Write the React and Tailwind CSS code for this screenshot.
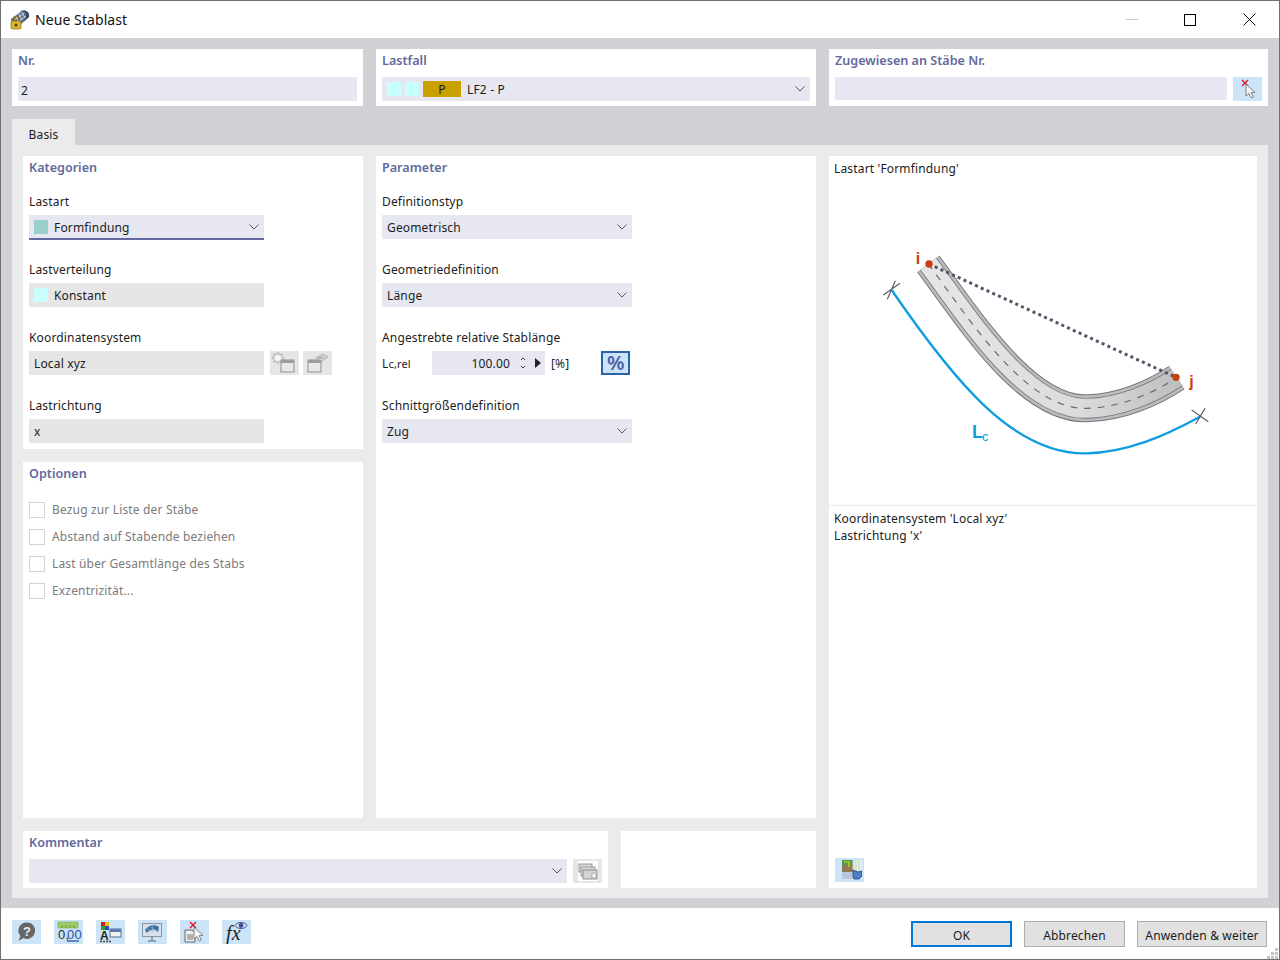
import React from 'react'

const headingCls = 'text-[12.6px] tracking-normal font-semibold text-[#636a9c] leading-[24px] h-[22px]'

function Chevron() {
  return (
    <svg width="10" height="6" viewBox="0 0 10 6" className="shrink-0">
      <path d="M0.5 0.5 L5 5 L9.5 0.5" fill="none" stroke="#55555f" strokeWidth="1" />
    </svg>
  )
}

function Heading({ children }) {
  return <div className={headingCls}>{children}</div>
}

function Txt({ className = '', children }) {
  return <span className={`pt-[2px] ${className}`}>{children}</span>
}

function Select({ className = '', children }) {
  return (
    <div className={`h-6 bg-[#e6e7f1] flex items-center justify-between pl-[5px] pr-[5px] ${className}`}>
      <div className="flex items-center min-w-0">{children}</div>
      <Chevron />
    </div>
  )
}

function Group({ label, children, last }) {
  return (
    <div className={last ? '' : 'mb-5'}>
      <div className="h-6 leading-[22px]">{label}</div>
      {children}
    </div>
  )
}

function Check({ label }) {
  return (
    <div className="h-[27px] flex items-center gap-[7px] text-[#7b7b7b]">
      <div className="w-4 h-4 border border-[#d4d4d4] bg-white" />
      <span>{label}</span>
    </div>
  )
}

function IconBtn({ children, tone = 'blue', className = '' }) {
  return (
    <div className={`w-[29px] h-6 flex items-center justify-center shrink-0 ${tone === 'blue' ? 'bg-[#cce4f7]' : 'bg-[#e6e6e6]'} ${className}`}>
      {children}
    </div>
  )
}

function Cursor({ x = 0, y = 0 }) {
  return (
    <g transform={`translate(${x} ${y})`}>
      <path d="M0 0 L0 12 L3 9.5 L5.2 14 L7.4 13 L5.2 8.6 L9 8.4 Z" fill="#f4f4f4" stroke="#777" strokeWidth="0.9" strokeLinejoin="round" />
    </g>
  )
}

function RedX({ x, y }) {
  return <path d={`M${x} ${y} l6 6 M${x + 6} ${y} l-6 6`} stroke="#e8112d" strokeWidth="1.4" />
}

function TitleIcon() {
  return (
    <svg width="20" height="20" viewBox="0 0 20 20" className="shrink-0">
      <path d="M1 9 L11 1 C14 -0.5 20 2 19 7 L9 16 C5 17 1 14 1 9 Z" fill="#5f7190" />
      <path d="M12 1 C16 1 17 5 15 9 L13 12 L19 7 C20 2 15 -0.5 12 1 Z" fill="#39465f" />
      <path d="M3 7 L11 1.5 M4 10 L14 3.5 M6 13 L16 6 M6 6 L9 13 M9 4 L12 10 M12 2.5 L15 8" stroke="#cfd8e6" strokeWidth="0.9" />
      <path d="M4 11 v-2 a2.5 2.5 0 0 1 5 0 v2" fill="none" stroke="#8a6d10" strokeWidth="1.2" />
      <rect x="1" y="11" width="10" height="8" rx="1.5" fill="#d9b531" stroke="#8a6d10" strokeWidth="0.7" />
      <circle cx="6" cy="15" r="1.5" fill="#4f4010" />
    </svg>
  )
}

function CursorXIcon() {
  return (
    <svg width="29" height="24" viewBox="0 0 29 24">
      <RedX x={9} y={3} />
      <Cursor x={13} y={7} />
    </svg>
  )
}

function NewWindowIcon() {
  return (
    <svg width="29" height="24" viewBox="0 0 29 24">
      <path d="M8 1 l1.4 3 2.8-1.2 -.8 3 2.8 1.2 -2.8 1.4 .8 2.8 -2.8-1.2 -1.4 2.6 -1.4-2.6 -2.8 1.2 .8-2.8 -2.8-1.4 2.8-1.2 -.8-3 2.8 1.2 Z" fill="#f6f6f6" stroke="#a8a8a8" strokeWidth="0.9" />
      <rect x="11" y="9" width="13" height="12" fill="#e8e8e8" stroke="#8f8f8f" />
      <rect x="11" y="9" width="13" height="3" fill="#9d9d9d" />
    </svg>
  )
}

function EditWindowIcon() {
  return (
    <svg width="29" height="24" viewBox="0 0 29 24">
      <rect x="5" y="9" width="13" height="12" fill="#e8e8e8" stroke="#8f8f8f" />
      <rect x="5" y="9" width="13" height="3" fill="#9d9d9d" />
      <path d="M13 7 L20 3 L25 6 L19 10 Z" fill="#d0d0d0" stroke="#a8a8a8" strokeWidth="0.8" />
      <path d="M15 6 l5 1" stroke="#8f8f8f" strokeWidth="0.8" />
    </svg>
  )
}

function CopyIcon() {
  return (
    <div className="w-[20px] h-[20px] bg-white flex items-center justify-center">
      <svg width="20" height="20" viewBox="0 0 20 20">
        <rect x="1" y="3" width="13" height="8" fill="#d8d8d8" stroke="#9b9b9b" />
        <rect x="3" y="6" width="14" height="9" fill="#d8d8d8" stroke="#9b9b9b" />
        <rect x="5" y="9" width="14" height="9" fill="#d5d5d5" stroke="#8f8f8f" />
        <rect x="14" y="12" width="4" height="5" fill="#f5f5f5" stroke="#8f8f8f" strokeWidth="0.6" />
      </svg>
    </div>
  )
}

function PreviewIcon() {
  return (
    <svg width="24" height="24" viewBox="0 0 24 24">
      <rect x="4" y="2" width="20" height="12" fill="#e6efe6" />
      <rect x="4" y="2" width="11" height="12" fill="#8f7a55" />
      <rect x="4" y="2" width="11" height="5" fill="#5f8f5a" />
      <path d="M6 4 h5 v5" fill="none" stroke="#a8d80a" strokeWidth="1.6" />
      <path d="M15 2 v12 M18 2 v12 M21 2 v12" stroke="#c5d3c5" strokeWidth="1" />
      <rect x="4" y="14" width="14" height="7" fill="#aebcd2" opacity="0.7" />
      <path d="M15 12 l5 2 l4 -1 v5 l-3 3 h-5 l-1 -3 Z" fill="#4f7fbf" stroke="#1f3f7f" strokeWidth="0.8" />
    </svg>
  )
}

function HelpIcon() {
  return (
    <svg width="29" height="24" viewBox="0 0 29 24">
      <path d="M15 2.5 a8.2 8.2 0 1 1 -3.6 15.6 L6.5 21 L8.4 16 A8.2 8.2 0 0 1 15 2.5 Z" fill="#666" />
      <text x="15" y="15.5" textAnchor="middle" fontSize="13" fontWeight="700" fill="#e8eef4" fontFamily="Liberation Sans, sans-serif">?</text>
    </svg>
  )
}

function UnitsIcon() {
  return (
    <svg width="29" height="24" viewBox="0 0 29 24">
      <rect x="4" y="2" width="20" height="6" fill="#9ccc65" stroke="#7aa84a" strokeWidth="0.6" />
      <path d="M8 5 v3 M12 5 v3 M16 5 v3 M20 5 v3" stroke="#5d8a35" strokeWidth="0.7" />
      <text x="4" y="19" fontSize="13" fill="#2b2b2b" fontFamily="Liberation Sans, sans-serif">0,</text>
      <text x="13" y="19" fontSize="13" fill="#2f4f9f" fontFamily="Liberation Sans, sans-serif">00</text>
      <path d="M13 21 h12" stroke="#2f4f9f" strokeWidth="1.3" />
    </svg>
  )
}

function ColorsIcon() {
  return (
    <svg width="29" height="24" viewBox="0 0 29 24">
      <rect x="5" y="2" width="4" height="4" fill="#d21f1f" />
      <rect x="9" y="2" width="4" height="4" fill="#e0c21a" />
      <rect x="5" y="6" width="4" height="4" fill="#2f9e3a" />
      <rect x="9" y="6" width="4" height="4" fill="#2f4fbf" />
      <text x="4" y="20" fontSize="12" fontWeight="700" fill="#222" fontFamily="Liberation Sans, sans-serif">A</text>
      <path d="M4 21.5 h2 M7 21.5 h2 M10 21.5 h2 M13 21.5 h2" stroke="#444" strokeWidth="1.4" />
      <rect x="14" y="9" width="11" height="8" fill="#f2f2f2" stroke="#5f6f8f" />
      <rect x="14" y="9" width="11" height="3" fill="#5c7cb0" />
    </svg>
  )
}

function MonitorIcon() {
  return (
    <svg width="29" height="24" viewBox="0 0 29 24">
      <rect x="4.5" y="3.5" width="19" height="13" fill="#d6e0ea" stroke="#8d959d" />
      <path d="M7 10 C10 5 17 4 21 7 L20 12 C17 9 12 9 9 13 Z" fill="#41709f" />
      <path d="M9 9 L16 12 M12 7 L19 11 M15 6 L14 11" stroke="#9cc0de" strokeWidth="0.6" />
      <path d="M14 17 v3 M10 21 h8" stroke="#7d858d" strokeWidth="1.5" />
    </svg>
  )
}

function DocCursorIcon() {
  return (
    <svg width="29" height="24" viewBox="0 0 29 24">
      <RedX x={10} y={2} />
      <path d="M5 10 h7 l3 3 v9 H5 Z" fill="#efefef" stroke="#666" />
      <path d="M7 15 h6 M7 17 h6 M7 19 h6" stroke="#555" strokeWidth="0.8" />
      <Cursor x={14} y={7} />
    </svg>
  )
}

function FxIcon() {
  return (
    <svg width="29" height="24" viewBox="0 0 29 24">
      <text x="4" y="20" fontSize="20" fontStyle="italic" fill="#222" fontFamily="Liberation Serif, serif">fx</text>
      <path d="M13 5.5 C15 1.5 23 1.5 25 5.5 C23 9.5 15 9.5 13 5.5 Z" fill="#dfe7f3" stroke="#3f4f8f" />
      <circle cx="19" cy="5.5" r="2.4" fill="#3f4f8f" />
    </svg>
  )
}

function Diagram() {
  const center = 'M175 72 C300 240 470 510 650 505 C750 503 850 460 920 413'
  return (
    <svg viewBox="829 182 428 323" className="block w-[428px] h-[323px]">
      <defs>
        <linearGradient id="web" gradientUnits="userSpaceOnUse" x1="150" y1="0" x2="940" y2="0">
          <stop offset="0" stopColor="#e6e6e6" />
          <stop offset="0.6" stopColor="#dcdcdc" />
          <stop offset="1" stopColor="#bdbdbd" />
        </linearGradient>
      </defs>
      <g transform="translate(870 240) scale(0.33333)" fill="none">
        <path d={center} stroke="#77777f" strokeWidth="84" />
        <path d={center} stroke="#bcbcbe" strokeWidth="78" />
        <path d={center} stroke="#77777f" strokeWidth="62" />
        <path d={center} stroke="url(#web)" strokeWidth="57" />
        <path d={center} stroke="#666672" strokeWidth="3.5" strokeDasharray="20 21" />
        <path d="M177 72 L918 412" stroke="#54546a" strokeWidth="9" strokeDasharray="9 10" />
        <circle cx="177" cy="72" r="11" fill="#c8400e" />
        <circle cx="918" cy="412" r="11" fill="#c8400e" />
        <path d="M65 150 C250 420 430 645 650 640 C770 637 880 590 990 530" stroke="#0f9de0" strokeWidth="7" />
        <path d="M52 178 L76 122 M40 165 L90 130 M965 510 L1015 545 M977 552 L1005 505" stroke="#5b5b6e" strokeWidth="3.5" />
        <text x="137" y="72" fontSize="48" fontWeight="700" fill="#c8400e" stroke="none" fontFamily="Liberation Sans, sans-serif">i</text>
        <text x="958" y="440" fontSize="48" fontWeight="700" fill="#c8400e" stroke="none" fontFamily="Liberation Sans, sans-serif">j</text>
        <text x="306" y="594" fontSize="54" fontWeight="700" fill="#0f9de0" stroke="none" fontFamily="Liberation Sans, sans-serif">L</text>
        <text x="336" y="603" fontSize="38" fill="#0f9de0" stroke="none" fontFamily="Liberation Sans, sans-serif">c</text>
      </g>
    </svg>
  )
}

function Grip() {
  return (
    <svg width="12" height="12" viewBox="0 0 12 12" className="absolute right-0 bottom-0">
      <path d="M8 1h3v3H8zM4 5h3v3H4zM8 5h3v3H8zM0 9h3v3H0zM4 9h3v3H4zM8 9h3v3H8z" fill="#c4c4c4" />
    </svg>
  )
}

export default function App() {
  return (
    <div className="w-[1280px] h-[960px] border border-[#6f6f6f] flex flex-col bg-[#d1d0d5] text-[12px] tracking-[0.16px] text-[#1c1c1c] font-['Noto_Sans',sans-serif] overflow-hidden">
      <div className="h-[37px] bg-white flex items-center shrink-0 pl-[9px]">
        <TitleIcon />
        <span className="ml-[5px] text-[14px] tracking-[0.08px] text-[#111]">Neue Stablast</span>
        <div className="ml-auto flex items-center h-full">
          <div className="w-[59px] pl-[2px] flex justify-center"><div className="w-3 h-px bg-[#c8c8c8]" /></div>
          <div className="w-[59px] mr-[1px] flex justify-center"><div className="w-3 h-3 border border-black" /></div>
          <div className="w-[59px] flex justify-center">
            <svg width="13" height="13" viewBox="0 0 13 13"><path d="M0.5 0.5 L12.5 12.5 M12.5 0.5 L0.5 12.5" stroke="#111" strokeWidth="1" /></svg>
          </div>
        </div>
      </div>

      <div className="flex-1 px-[11px] pt-[11px]">
        <div className="flex gap-[13px] h-[57px]">
          <div className="w-[351px] bg-white px-[6px]">
            <Heading>Nr.</Heading>
            <div className="mt-[6px] h-6 bg-[#e6e7f1] flex items-center px-[3px]"><span className="pt-[3px]">2</span></div>
          </div>
          <div className="w-[440px] bg-white px-[6px]">
            <Heading>Lastfall</Heading>
            <Select className="mt-[6px]">
              <div className="w-[14px] h-[14px] bg-[#c9ffff]" />
              <div className="w-[14px] h-[14px] bg-[#c9ffff] ml-1" />
              <div className="w-[38px] h-4 bg-[#c8a000] ml-1 flex items-center justify-center"><Txt>P</Txt></div>
              <Txt className="ml-[6px]">LF2 - P</Txt>
            </Select>
          </div>
          <div className="w-[439px] bg-white px-[6px]">
            <Heading>Zugewiesen an Stäbe Nr.</Heading>
            <div className="mt-[6px] flex gap-[6px]">
              <div className="w-[392px] h-[23px] bg-[#e6e7f1]" />
              <IconBtn><CursorXIcon /></IconBtn>
            </div>
          </div>
        </div>

        <div className="mt-[13px] w-[63px] h-[26px] bg-[#ebebeb] flex items-center justify-center pt-[6px]">Basis</div>

        <div className="h-[753px] bg-[#ebebeb] p-[11px] pb-[10px] flex gap-[13px]">
          <div className="w-[793px] flex flex-col gap-[13px]">
            <div className="flex gap-[13px] h-[662px]">
              <div className="w-[340px] flex flex-col gap-[13px]">
                <div className="h-[293px] bg-white px-[6px]">
                  <Heading>Kategorien</Heading>
                  <div className="mt-[13px] w-[235px]">
                    <Group label="Lastart">
                      <Select className="border-b-2 border-[#6268a0] h-[25px]">
                        <div className="w-[14px] h-[14px] bg-[#99cfcd]" />
                        <Txt className="ml-[6px]">Formfindung</Txt>
                      </Select>
                    </Group>
                    <div className="-mt-px">
                      <Group label="Lastverteilung">
                        <div className="h-6 bg-[#e6e6e6] flex items-center pl-[5px]">
                          <div className="w-[14px] h-[14px] bg-[#c9ffff]" />
                          <Txt className="ml-[6px]">Konstant</Txt>
                        </div>
                      </Group>
                    </div>
                    <Group label="Koordinatensystem">
                      <div className="flex gap-1 w-[303px]">
                        <div className="w-[235px] h-6 mr-[2px] bg-[#e6e6e6] flex items-center pl-[5px]"><Txt>Local xyz</Txt></div>
                        <IconBtn tone="gray"><NewWindowIcon /></IconBtn>
                        <IconBtn tone="gray"><EditWindowIcon /></IconBtn>
                      </div>
                    </Group>
                    <Group label="Lastrichtung" last>
                      <div className="h-6 bg-[#e6e6e6] flex items-center pl-[5px]"><Txt>x</Txt></div>
                    </Group>
                  </div>
                </div>
                <div className="flex-1 bg-white px-[6px]">
                  <Heading>Optionen</Heading>
                  <div className="mt-3">
                    <Check label="Bezug zur Liste der Stäbe" />
                    <Check label="Abstand auf Stabende beziehen" />
                    <Check label="Last über Gesamtlänge des Stabs" />
                    <Check label="Exzentrizität..." />
                  </div>
                </div>
              </div>

              <div className="w-[440px] bg-white px-[6px]">
                <Heading>Parameter</Heading>
                <div className="mt-[13px] w-[250px]">
                  <Group label="Definitionstyp"><Select><Txt>Geometrisch</Txt></Select></Group>
                  <Group label="Geometriedefinition"><Select><Txt>Länge</Txt></Select></Group>
                  <Group label="Angestrebte relative Stablänge">
                    <div className="h-6 flex items-center">
                      <Txt className="w-[50px]">L<span className="text-[11px]">c,rel</span></Txt>
                      <div className="w-[113px] h-6 bg-[#e6e7f1] flex items-center">
                        <Txt className="w-[78px] text-right">100.00</Txt>
                        <svg width="10" height="14" viewBox="0 0 10 14" className="ml-2">
                          <path d="M3 4 L5 2 L7 4 M3 10 L5 12 L7 10" fill="none" stroke="#444" strokeWidth="1" />
                        </svg>
                        <svg width="8" height="10" viewBox="0 0 8 10" className="ml-[6px]">
                          <path d="M1 0 L7 5 L1 10 Z" fill="#222" />
                        </svg>
                      </div>
                      <Txt className="ml-[6px]">[%]</Txt>
                      <div className="ml-[32px] w-[29px] h-6 bg-[#cce4f7] border-2 border-[#2a64a8] flex items-center justify-center text-[20px] font-semibold text-[#4b5fa5] leading-none">%</div>
                    </div>
                  </Group>
                  <Group label="Schnittgrößendefinition" last><Select><Txt>Zug</Txt></Select></Group>
                </div>
              </div>
            </div>

            <div className="flex gap-[13px] h-[57px]">
              <div className="w-[585px] bg-white px-[6px]">
                <Heading>Kommentar</Heading>
                <div className="mt-[6px] flex gap-[6px]">
                  <Select className="w-[538px]" />
                  <IconBtn tone="gray"><CopyIcon /></IconBtn>
                </div>
              </div>
              <div className="w-[195px] bg-white" />
            </div>
          </div>

          <div className="w-[428px] bg-white flex flex-col">
            <div className="h-[350px] border-b border-[#ececec]">
              <div className="h-[26px] pl-[5px] pt-[3px] leading-[20px]">Lastart 'Formfindung'</div>
              <Diagram />
            </div>
            <div className="flex-1 pl-[5px] pt-[4px] leading-[17px]">
              <div>Koordinatensystem 'Local xyz'</div>
              <div>Lastrichtung 'x'</div>
            </div>
            <div className="pl-[6px] pb-[6px]">
              <IconBtn><PreviewIcon /></IconBtn>
            </div>
          </div>
        </div>
      </div>

      <div className="h-[51px] shrink-0 bg-white flex items-center justify-between pl-[11px] pr-[12px] relative">
        <div className="flex gap-[13px] -mt-[4px]">
          <IconBtn><HelpIcon /></IconBtn>
          <IconBtn><UnitsIcon /></IconBtn>
          <IconBtn><ColorsIcon /></IconBtn>
          <IconBtn><MonitorIcon /></IconBtn>
          <IconBtn><DocCursorIcon /></IconBtn>
          <IconBtn><FxIcon /></IconBtn>
        </div>
        <div className="flex gap-3 mt-[1px]">
          <div className="w-[101px] h-[26px] bg-[#e1e1e1] border-2 border-[#0078d7] flex items-center justify-center pt-[3px]">OK</div>
          <div className="w-[101px] h-[26px] bg-[#e1e1e1] border border-[#adadad] flex items-center justify-center pt-[3px]">Abbrechen</div>
          <div className="w-[130px] h-[26px] bg-[#e1e1e1] border border-[#adadad] flex items-center justify-center pt-[3px]">Anwenden &amp; weiter</div>
        </div>
        <Grip />
      </div>
    </div>
  )
}
